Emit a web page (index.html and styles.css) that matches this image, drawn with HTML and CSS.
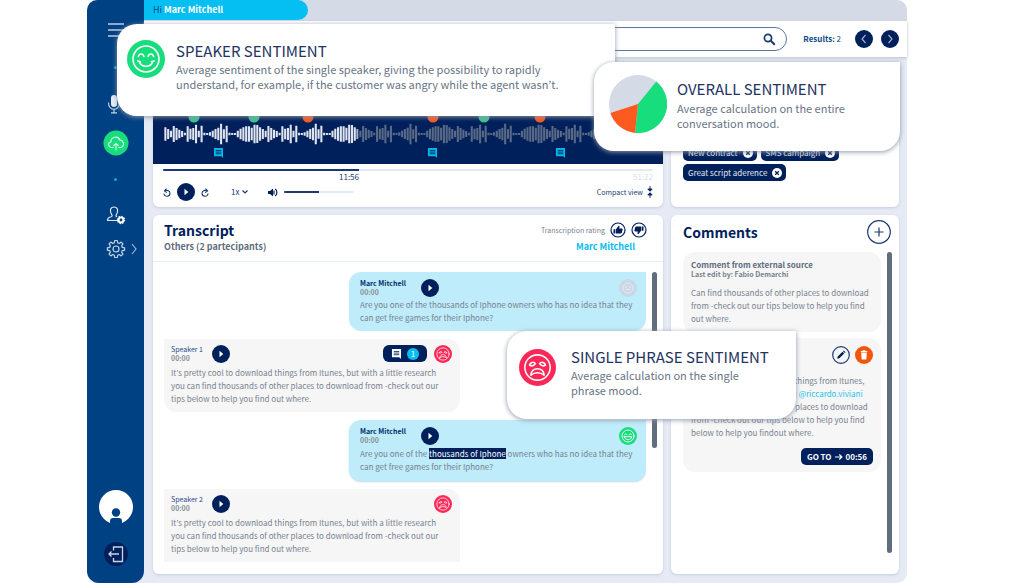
FILE: index.html
```html
<!DOCTYPE html>
<html lang="en">
<head>
<meta charset="utf-8">
<title>Conversation review</title>
<link rel="stylesheet" href="styles.css">
</head>
<body>
<svg class="defs" aria-hidden="true">
  <symbol id="happy" viewBox="0 0 36 36">
    <circle cx="18" cy="18" r="18" fill="currentColor"/>
    <g fill="none" stroke="#fff" stroke-width="1.5" stroke-linecap="round" stroke-linejoin="round">
      <circle cx="18" cy="18" r="12.3"/>
      <path d="M10.8 15.500c.8-3 4.400-3 5.200 0M20 15.500c.8-3 4.400-3 5.200 0M10.300 19.800l2.400.8M25.700 19.800l-2.400.8M11.500 20.300c2.200 6.200 10.800 6.200 13 0"/>
    </g>
  </symbol>
  <symbol id="grin" viewBox="0 0 36 36">
    <circle cx="18" cy="18" r="18" fill="currentColor"/>
    <g fill="none" stroke="#fff" stroke-width="1.800" stroke-linecap="round" stroke-linejoin="round">
      <circle cx="18" cy="18" r="12"/>
      <path d="M11 15.500c1-2.500 4-2.500 5 0M20 15.500c1-2.500 4-2.500 5 0M10.500 19.500h15c-1 8-14 8-15 0z"/>
    </g>
  </symbol>
  <symbol id="sad" viewBox="0 0 36 36">
    <circle cx="18" cy="18" r="18" fill="currentColor"/>
    <g fill="none" stroke="#fff" stroke-width="1.500" stroke-linecap="round" stroke-linejoin="round">
      <circle cx="18" cy="18" r="12.300"/>
      <path d="M10.200 15.500c.8-2.600 4-3.400 5.800-1.300M25.800 15.500c-.8-2.600-4-3.400-5.800-1.300M10.500 15.800c1.500.9 3.300.6 4.500-.6M25.500 15.800c-1.500.9-3.300.6-4.500-.6M11.500 25.500c0-8.500 13-8.500 13 0-3.500-3.200-9.500-3.200-13 0z"/>
    </g>
  </symbol>
  <symbol id="play" viewBox="0 0 18 18">
    <circle cx="9" cy="9" r="9" fill="#00205b"/>
    <path d="M7.500 5.800L11.300 9l-3.800 3.200z" fill="#fff"/>
  </symbol>
  <symbol id="note" viewBox="0 0 12 11">
    <path d="M1 0h10v11L9 9H1z" fill="currentColor"/>
    <path d="M3 2.700h6M3 4.500h6M3 6.300h6" stroke="var(--ink)" stroke-width=".9"/>
  </symbol>
  <symbol id="close" viewBox="0 0 10 10">
    <circle cx="5" cy="5" r="5" fill="#fff"/>
    <path d="M3.200 3.200l3.600 3.600M6.800 3.200L3.200 6.800" stroke="#00205b" stroke-width="1.300"/>
  </symbol>
  <symbol id="thumb" viewBox="0 0 16 16">
    <circle cx="8" cy="8" r="7" fill="none" stroke="#00205b" stroke-width="1.200"/>
    <path d="M3.500 7.300h1.900v4.200H3.500zM6 7.200l2.600-3.500c.8 0 1 .6.9 1.200l-.3 1.700h2.500c.7 0 1 .5.900 1.100l-.8 3.100c-.1.500-.5.800-1 .8H6z" fill="#00205b"/>
  </symbol>
</svg>

<div class="app">
  <nav class="sidebar" aria-label="Main">
    <button class="side-btn menu" aria-label="Menu"><svg width="18" height="16" viewBox="0 0 18 16"><path d="M1 2h16M1 8h16M1 14h16" stroke="#b9cbe2" stroke-width="1.300"/></svg></button>
    <span class="dot"></span>
    <button class="side-btn mic" aria-label="Record"><svg width="20" height="20" viewBox="-1 0 20 20"><rect x="4" y="1" width="6" height="12" rx="3" fill="#e4ecf6"/><path d="M1.500 8.500c0 9 11 9 11 0M7 15.500v3M4 18.800h6" fill="none" stroke="#c5d4e8" stroke-width="1.200"/></svg></button>
    <button class="side-btn upload" aria-label="Upload"><svg width="26" height="26" viewBox="0 0 26 26"><circle cx="13" cy="13" r="12.500" fill="#17dd7d"/><path d="M10.500 17.500H8.800c-4 0-4.200-5-.9-5.500 0-5.500 7.500-6.500 8.900-1.800 4.300-.6 5.200 6.800.9 7.300h-2.200M13 20v-6.500M10.800 15.500l2.200-2.200 2.200 2.200" fill="none" stroke="#d8fbe9" stroke-width="1.100" stroke-linecap="round" stroke-linejoin="round"/></svg></button>
    <span class="dot"></span>
    <button class="side-btn user" aria-label="Users"><svg width="20" height="20" viewBox="0 0 20 20"><path d="M12 15.500H1.500c0-2.500 1-3 3-3.500 1.500-.4 2-1 1.400-1.800C3.200 6.500 4.200 2 8 2s4.900 4.500 2.200 8.200c-.5.700-.1 1.200.8 1.600" fill="none" stroke="#dbe6f3" stroke-width="1.200"/><circle cx="15" cy="15" r="2.400" fill="none" stroke="#fff" stroke-width="2"/><circle cx="15" cy="15" r="3.600" fill="none" stroke="#fff" stroke-width="1.200" stroke-dasharray="1.400 1.400"/></svg></button>
    <button class="side-btn gear" aria-label="Settings"><svg width="20" height="20" viewBox="0 0 20 20"><g fill="none" stroke="#c5d4e8" stroke-width="1.200" stroke-linejoin="round"><circle cx="10" cy="10" r="3"/><path d="M8.700 1.500h2.600l.4 2.300 1.600.7 1.900-1.400 1.800 1.800-1.400 1.900.7 1.600 2.300.4v2.400l-2.300.4-.7 1.600 1.400 1.900-1.800 1.800-1.900-1.400-1.600.7-.4 2.300H8.700l-.4-2.300-1.600-.7-1.900 1.400L3 15.100l1.400-1.900-.7-1.600-2.300-.4V8.800l2.300-.4.700-1.600L3 4.900l1.800-1.800 1.900 1.400 1.600-.7z"/></g></svg><svg class="more" width="6" height="12" viewBox="0 0 6 12"><path d="M1 1l4 5-4 5" fill="none" stroke="#9db6d6" stroke-width="1.200"/></svg></button>
    <button class="side-btn avatar" aria-label="Profile"><svg width="34" height="34" viewBox="0 0 34 34"><circle cx="17" cy="17" r="17" fill="#fff"/><circle cx="17" cy="22.500" r="4.200" fill="#004183"/><path d="M11 34v-3c0-2 1.200-3 3-3h6c1.800 0 3 1 3 3v3z" fill="#004183"/></svg></button>
    <button class="side-btn" aria-label="Log out"><svg width="24" height="24" viewBox="0 0 24 24"><circle cx="12" cy="12" r="12" fill="#00205b"/><path d="M9.500 8.500V5h9v14.500h-9V16M15 12H5M7.500 9.500L5 12l2.500 2.500" fill="none" stroke="#c9d5ea" stroke-width="1.300"/></svg></button>
  </nav>

  <div class="main">
    <header class="topbar"><div class="greeting">Hi <b>Marc Mitchell</b></div></header>
    <div class="searchbar">
      <label class="search"><input type="search" aria-label="Search"><svg width="13" height="13" viewBox="0 0 13 13"><circle cx="5" cy="5" r="3.600" fill="none" stroke="#1c3a70" stroke-width="1.700"/><path d="M7.800 7.800l4 4" stroke="#1c3a70" stroke-width="2"/></svg></label>
      <span class="results"><b>Results:</b> 2</span>
      <span class="pager">
        <button aria-label="Previous"><svg width="18" height="18" viewBox="0 0 18 18"><circle cx="9" cy="9" r="9" fill="#00205b"/><path d="M10.500 5L7 9l3.500 4" fill="none" stroke="#9fb0cc" stroke-width="1.200"/></svg></button>
        <button aria-label="Next"><svg width="18" height="18" viewBox="0 0 18 18"><circle cx="9" cy="9" r="9" fill="#00205b"/><path d="M7.500 5L11 9l-3.500 4" fill="none" stroke="#9fb0cc" stroke-width="1.200"/></svg></button>
      </span>
    </div>

    <div class="content">
      <section class="card player">
        <div class="wave">
          <svg width="100%" height="48" viewBox="0 0 490 48" preserveAspectRatio="none" aria-hidden="true">
            <defs>
              <path id="period" d="M5 10v46M15 17v32M25 15v36M35 5v56M45 23v20M55 8v50M65 29v8M75 30v6M85 28v10M95 23v20M105 18v30M115 14v38M125 2v62M135 19v28M145 8v50M155 29v8M165 30v6M175 30v6M185 23v20M195 17v32M205 13v40M215 10v46M225 10v46M235 14v38M245 5v56M255 6v54M265 13v40M275 18v30M285 23v20M295 9v48M305 15v36M315 20v26M325 24v18M335 29v8"/>
              <g id="bars"><use href="#period" x="-260"/><use href="#period" x="80"/><use href="#period" x="420"/><use href="#period" x="760"/><use href="#period" x="1100"/><use href="#period" x="1440"/></g>
              <clipPath id="played"><rect x="0" y="0" width="696" height="66"/></clipPath>
              <clipPath id="rest"><rect x="696" y="0" width="1060" height="66"/></clipPath>
            </defs>
            <g transform="translate(1 7) scale(.2785 .3333)" stroke-width="7.500">
              <g clip-path="url(#played)" stroke="#dfe4ee"><use href="#bars"/></g>
              <g clip-path="url(#rest)" stroke="#5a6a86"><use href="#bars"/></g>
            </g>
            <g fill="#3cc48a"><circle cx="31" cy="1" r="5.500"/><circle cx="91" cy="1" r="5.500"/><circle cx="321" cy="1" r="5.500"/></g>
            <g fill="#fa5a1e"><circle cx="145" cy="1" r="5.500"/><circle cx="270" cy="1" r="5.500"/><circle cx="377" cy="1" r="5.500"/></g>
            <g color="#07b6e8"><use href="#note" x="50" y="32" width="11" height="10"/><use href="#note" x="264" y="32" width="11" height="10"/><use href="#note" x="392" y="32" width="11" height="10"/></g>
          </svg>
        </div>
        <div class="timeline">
          <input class="range seek" type="range" aria-label="Position" value="40">
          <div class="times"><span class="elapsed">11:56</span><span class="total">51:22</span></div>
          <div class="controls">
            <button aria-label="Back"><svg width="8" height="9" viewBox="0 0 8 9"><path d="M1.500 3c3-1.600 5.500 0 5.500 2.200C7 9.200 1 9.200 1 5.500M3.500.6L1.400 3l2.500 1.600" fill="none" stroke="#1c3a70" stroke-width="1.100"/></svg></button>
            <button class="big" aria-label="Play"><svg width="18" height="18"><use href="#play"/></svg></button>
            <button aria-label="Forward"><svg class="flip" width="8" height="9" viewBox="0 0 8 9"><path d="M1.500 3c3-1.600 5.500 0 5.500 2.200C7 9.200 1 9.200 1 5.500M3.500.6L1.400 3l2.500 1.600" fill="none" stroke="#1c3a70" stroke-width="1.100"/></svg></button>
            <label class="speed"><select aria-label="Speed"><option>1x</option><option>2x</option></select><svg width="6" height="4" viewBox="0 0 6 4"><path d="M.5.5L3 3 5.500.5" fill="none" stroke="#1c3a70" stroke-width="1.200"/></svg></label>
            <svg width="10" height="9" viewBox="0 0 10 9" aria-hidden="true"><path d="M0 3h2l3-2.500v8L2 6H0z" fill="#00205b"/><path d="M6 2.500v4M7 1c2.500 1 2.500 6 0 7" fill="none" stroke="#00205b" stroke-width="1.200"/></svg>
            <input class="range volume" type="range" aria-label="Volume" value="50">
            <button class="compact">Compact view <svg width="6" height="12" viewBox="0 0 6 12"><path d="M3 0v5M.8 3h4.400L3 5.300zM3 12V7M.8 9h4.400L3 6.700z" fill="#00205b" stroke="#00205b" stroke-width=".9"/></svg></button>
          </div>
        </div>
      </section>

      <section class="card tags">
        <ul>
          <li>New contract <button aria-label="Remove New contract"><svg width="10" height="10"><use href="#close"/></svg></button></li>
          <li>SMS campaign <button aria-label="Remove SMS campaign"><svg width="10" height="10"><use href="#close"/></svg></button></li>
          <li>Great script aderence <button aria-label="Remove Great script aderence"><svg width="10" height="10"><use href="#close"/></svg></button></li>
        </ul>
      </section>

      <section class="card transcript">
        <div class="t-head">
          <div><h2>Transcript</h2><p class="others">Others (2 partecipants)</p></div>
          <div class="t-right">
            <div class="rating">Transcription rating
              <button aria-label="Good"><svg width="16" height="16"><use href="#thumb"/></svg></button>
              <button aria-label="Bad"><svg class="turn" width="16" height="16"><use href="#thumb"/></svg></button>
            </div>
            <a class="agent" href="#">Marc Mitchell</a>
          </div>
        </div>
        <div class="t-body">
          <div class="messages">
            <article class="bubble own flat">
              <header><div class="who"><b>Marc Mitchell</b><time>00:00</time></div><button aria-label="Play"><svg width="18" height="18"><use href="#play"/></svg></button><svg class="mood neutral" width="18" height="18" viewBox="0 0 36 36"><circle cx="18" cy="18" r="18" fill="currentColor"/><g fill="none" stroke="#e6e9f0" stroke-width="2"><circle cx="18" cy="18" r="10"/><path d="M12 16h4M20 16h4M13 21h10"/></g></svg></header>
              <p>Are you one of the thousands of Iphone owners who has no idea that they<br>can get free games for their Iphone?</p>
            </article>
            <article class="bubble">
              <header><div class="who"><span>Speaker 1</span><time>00:00</time></div><button aria-label="Play"><svg width="18" height="18"><use href="#play"/></svg></button><button class="count" aria-label="1 comment"><svg width="11" height="10"><use href="#note"/></svg><span>1</span></button><svg class="mood bad" width="18" height="18"><use href="#sad"/></svg></header>
              <p>It’s pretty cool to download things from Itunes, but with a little research<br>you can find thousands of other places to download from -check out our<br>tips below to help you find out where.</p>
            </article>
            <article class="bubble own">
              <header><div class="who"><b>Marc Mitchell</b><time>00:00</time></div><button aria-label="Play"><svg width="18" height="18"><use href="#play"/></svg></button><svg class="mood good" width="18" height="18"><use href="#grin"/></svg></header>
              <p>Are you one of the <mark>thousands of Iphone</mark> owners who has no idea that they<br>can get free games for their Iphone?</p>
            </article>
            <article class="bubble cut">
              <header><div class="who"><span>Speaker 2</span><time>00:00</time></div><button aria-label="Play"><svg width="18" height="18"><use href="#play"/></svg></button><svg class="mood bad" width="18" height="18"><use href="#sad"/></svg></header>
              <p>It’s pretty cool to download things from Itunes, but with a little research<br>you can find thousands of other places to download from -check out our<br>tips below to help you find out where.</p>
            </article>
          </div>
          <div class="scroll short"></div>
        </div>
      </section>

      <section class="card comments">
        <div class="c-head"><h2>Comments</h2><button aria-label="Add comment"><svg width="24" height="24" viewBox="0 0 24 24"><circle cx="12" cy="12" r="11.300" fill="none" stroke="#1c3a70" stroke-width="1.200"/><path d="M12 7.500v9M7.500 12h9" stroke="#1c3a70" stroke-width="1.200"/></svg></button></div>
        <div class="c-body">
          <div class="c-list">
            <article class="comment">
              <h3>Comment from external source</h3>
              <p class="edited">Last edit by: Fabio Demarchi</p>
              <p>Can find thousands of other places to download<br>from -check out our tips below to help you find<br>out where.</p>
            </article>
            <article class="comment">
              <div class="tools">
                <button aria-label="Edit"><svg width="18" height="18" viewBox="0 0 18 18"><circle cx="9" cy="9" r="8.300" fill="none" stroke="#1c3a70" stroke-width="1.200"/><path d="M5.200 12.800l.5-2.200 4.800-4.800 1.700 1.700-4.800 4.800zM11 5.300l.8-.8 1.700 1.700-.8.800z" fill="#00205b"/></svg></button>
                <button aria-label="Delete"><svg width="18" height="18" viewBox="0 0 18 18"><circle cx="9" cy="9" r="9" fill="#f0560f"/><path d="M5.800 5h6.400v1.200H5.800zM7.700 4.200h2.600V5H7.700zM6.200 6.800h5.600l-.4 6.700H6.600z" fill="#fff"/></svg></button>
              </div>
              <p>It’s pretty cool to download things from Itunes,<br>but with a little research you <a href="#">@riccardo.viviani</a><br>can find thousands of other places to download<br>from -check out our tips below to help you find<br>below to help you findout where.</p>
              <button class="goto">GO TO <svg width="8" height="8" viewBox="0 0 9 8"><path d="M0 4h7.500M4.800 1.200L7.800 4 4.800 6.800" fill="none" stroke="#fff" stroke-width="1.300"/></svg> 00:56</button>
            </article>
          </div>
          <div class="scroll"></div>
        </div>
      </section>
    </div>
  </div>

  <aside class="callout speaker">
    <svg class="good" width="38" height="38"><use href="#happy"/></svg>
    <div><h2>SPEAKER SENTIMENT</h2><p>Average sentiment of the single speaker, giving the possibility to rapidly<br>understand, for example, if the customer was angry while the agent wasn’t.</p></div>
  </aside>
  <aside class="callout overall">
    <svg width="58" height="58" viewBox="-29 -29 58 58"><circle r="29" fill="#d5dbe6"/><path d="M0 0L18.200-22.600A29 29 0 0 1-3 28.900z" fill="#17dd7d"/><path d="M0 0L-3 28.900A29 29 0 0 1-27.600 9z" fill="#fd5a20"/></svg>
    <div><h2>OVERALL SENTIMENT</h2><p>Average calculation on the entire<br>conversation mood.</p></div>
  </aside>
  <aside class="callout phrase">
    <svg class="bad" width="37" height="37"><use href="#sad"/></svg>
    <div><h2>SINGLE PHRASE SENTIMENT</h2><p>Average calculation on the single<br>phrase mood.</p></div>
  </aside>
</div>
</body>
</html>
```

FILE: styles.css
```css
:root { --ink: #00205b; --slate: #5f6d7e; --text: #76828f; --cyan: #05bdf0; }
* { box-sizing: border-box; }
body { margin: 0; background: #fff; color: var(--text); font: 8px/12px "Noto Sans CJK KR", "Noto Sans", sans-serif; }
h2, h3, p, ul { margin: 0; padding: 0; }
svg { display: block; flex: none; }
button { display: flex; align-items: center; flex: none; margin: 0; padding: 0; border: 0; background: none; color: inherit; font: inherit; }
a { text-decoration: none; }
.defs { position: absolute; width: 0; height: 0; }
.good { color: #17dd7d; }
.bad { color: #fb2857; }
.neutral { color: #c9d8e6; }

.app { position: relative; display: flex; height: 100vh; margin: 0 117px 0 87px; background: #e6eaf4; border-radius: 10px; }

.sidebar { display: flex; flex-direction: column; align-items: center; flex: none; width: 57px; padding: 22px 0 17px; background: #004183; border-radius: 10px 0 12px 12px; }
.dot { flex: none; width: 3px; height: 3px; margin: 28px 0 25px; border-radius: 2px; background: #0aa9e0; }
.side-btn { position: relative; }
.upload { margin-top: 16px; }
.upload + .dot { margin: 22px 0 24px; }
.gear { margin-top: 14px; }
.more { position: absolute; left: 25px; }
.avatar { margin: auto 0 18px; }

.main { display: flex; flex-direction: column; flex: 1; min-width: 0; }
.topbar { flex: none; height: 21px; background: #d5dbe6; border-radius: 0 10px 0 0; }
.greeting { width: 164px; height: 20px; padding-left: 9px; border-radius: 0 10px 10px 0; background: #05bff3; color: #0b4a86; font-size: 9px; line-height: 20px; }
.greeting b { color: #fff; }
.searchbar { display: flex; align-items: center; flex: none; height: 36px; padding: 0 8px 0 20px; background: #fff; box-shadow: 0 1px 3px #b9c2d2; }
.search { display: flex; align-items: center; flex: 1; height: 24px; padding: 0 10px; border: 1px solid #5b76a0; border-radius: 12px; }
.search input { flex: 1; min-width: 0; border: 0; outline: 0; background: none; font: inherit; }
.results { margin: 0 14px 0 16px; color: #0c4b87; }
.pager { display: flex; gap: 8px; }

.content { display: grid; grid-template: 142px minmax(0, 1fr) / minmax(0, 1fr) 228px; gap: 8px; flex: 1; min-height: 0; padding: 8px 8px 9px 9px; }
.card { min-width: 0; background: #fff; border-radius: 6px; box-shadow: 0 1px 3px #c3cddd; overflow: hidden; }

.player { display: flex; flex-direction: column; }
.wave { display: flex; flex: 1; align-items: flex-end; padding: 0 10px; background: var(--ink); }
.timeline { padding: 5px 10px 6px; }
.range { display: block; appearance: none; height: 2px; margin: 0; border-radius: 1px; }
.range::-webkit-slider-thumb { appearance: none; width: 0; height: 0; }
.seek { width: 100%; background: linear-gradient(to right, #1c3a70 40%, #e3e8f1 40%); }
.times { display: flex; justify-content: space-between; }
.elapsed { width: 40%; color: #1c3a70; text-align: right; }
.total { color: #d9dfe9; }
.controls { display: flex; align-items: center; height: 18px; }
.big { margin: 0 6px; }
.flip { transform: scaleX(-1); }
.speed { display: flex; align-items: center; gap: 2px; margin: 0 20px 0 22px; }
.speed select { appearance: none; padding: 0; border: 0; background: none; color: #1c3a70; font: inherit; }
.volume { width: 70px; margin-left: 6px; background: linear-gradient(to right, #1c3a70 50%, #e3e8f1 50%); }
.compact { gap: 4px; margin-left: auto; color: #1c3a70; font-size: 7px; }

.tags { display: flex; align-items: flex-end; padding: 0 12px 26px; }
.tags ul { display: flex; flex-wrap: wrap; gap: 3px 4px; list-style: none; }
.tags li { display: flex; align-items: center; gap: 5px; height: 17px; padding: 0 4px 0 5px; border-radius: 5px; background: var(--ink); color: #e4e9f2; }

.card h2 { color: var(--ink); font-size: 14px; line-height: 18px; }
.transcript { display: flex; flex-direction: column; }
.t-head { display: flex; justify-content: space-between; flex: none; height: 47px; padding: 6px 16px 0 11px; border-bottom: 1px solid #e8ecf3; }
.others { color: var(--slate); font-size: 9px; line-height: 16px; font-weight: 700; }
.rating { display: flex; align-items: center; gap: 5px; height: 18px; font-size: 7px; }
.turn { transform: rotate(180deg); }
.t-right { display: flex; flex-direction: column; align-items: flex-end; }
.agent { padding-right: 12px; color: var(--cyan); font-size: 9px; line-height: 16px; font-weight: 700; }
.t-body { display: flex; gap: 6px; flex: 1; min-height: 0; padding: 10px 6px 0 11px; margin-bottom: 10px; }
.messages { display: flex; flex-direction: column; gap: 8px; flex: 1; overflow: hidden; }
.bubble { flex: none; align-self: flex-start; width: 296px; padding: 4px 8px 7px 7px; border-radius: 0 12px 12px 12px; background: #f6f6f6; }
.own { align-self: flex-end; width: 297px; padding: 5px 6px 8px 11px; border-radius: 12px 0 12px 12px; background: #bfecfb; box-shadow: 0 1px 2px #bcd9e6; }
.flat { padding-bottom: 7px; box-shadow: none; }
.cut { border-radius: 0 12px 0 0; }
.bubble header { display: flex; align-items: center; gap: 7px; height: 21px; margin-bottom: 2px; }
.own header { margin-bottom: 1px; }
.flat header { margin-bottom: 0; }
.bubble p { white-space: nowrap; line-height: 13px; }
.who { display: flex; flex-direction: column; min-width: 34px; color: #1f4a8a; font-size: 7px; line-height: 9px; }
.who b { color: #00306e; }
.own .who { min-width: 54px; }
time { font-weight: 700; color: #8a8f96; }
.mood { margin-left: auto; }
.own .mood { margin-right: 3px; }
.count { gap: 5px; height: 17px; margin-left: auto; padding: 0 8px; border-radius: 6px; background: var(--ink); color: #fff; }
.count span { width: 12px; height: 12px; border-radius: 6px; background: var(--cyan); }
.count + .mood { margin-left: 0; }
mark { background: var(--ink); color: #fff; }
.scroll { flex: none; width: 5px; border-radius: 3px; background: var(--slate); }
.short { height: 176px; }

.comments { padding: 5px 7px 21px 12px; display: flex; flex-direction: column; }
.c-head { display: flex; align-items: center; justify-content: space-between; height: 24px; margin-bottom: 8px; padding-right: 1px; }
.c-body { display: flex; gap: 6px; flex: 1; min-height: 0; }
.c-list { display: flex; flex-direction: column; gap: 6px; flex: 1; min-width: 0; }
.comment { padding: 8px 8px 7px; border-radius: 12px; background: #f6f6f6; white-space: nowrap; line-height: 13px; }
.comment h3 { color: var(--slate); font-size: 8px; line-height: 10px; }
.edited { margin-bottom: 7px; font-size: 7px; line-height: 9px; font-weight: 700; }
.comment a { color: #27c3ec; }
.tools { display: flex; justify-content: flex-end; gap: 5px; margin-bottom: 10px; }
.goto { gap: 3px; height: 17px; margin: 9px 0 0 auto; padding: 0 6px; border-radius: 5px; background: var(--ink); color: #fff; font-weight: 700; }

.callout { position: absolute; display: flex; align-items: flex-start; background: #fff; border-radius: 20px 0 20px 20px; box-shadow: 0 1px 5px #8e98a8; white-space: nowrap; }
.callout h2 { color: #24335f; font-size: 15px; line-height: 22px; font-weight: 400; }
.callout p { color: #687585; font-size: 11px; line-height: 15px; }
.speaker { left: 30px; top: 24px; width: 498px; height: 92px; padding: 16px 10px; gap: 11px; }
.overall { left: 507px; top: 62px; width: 306px; height: 89px; padding: 13px 15px; gap: 10px; }
.overall h2 { padding-top: 2px; line-height: 24px; }
.phrase { left: 420px; top: 331px; width: 289px; height: 88px; padding: 15px 12px; gap: 15px; }
.phrase svg { margin-top: 3px; }
```
